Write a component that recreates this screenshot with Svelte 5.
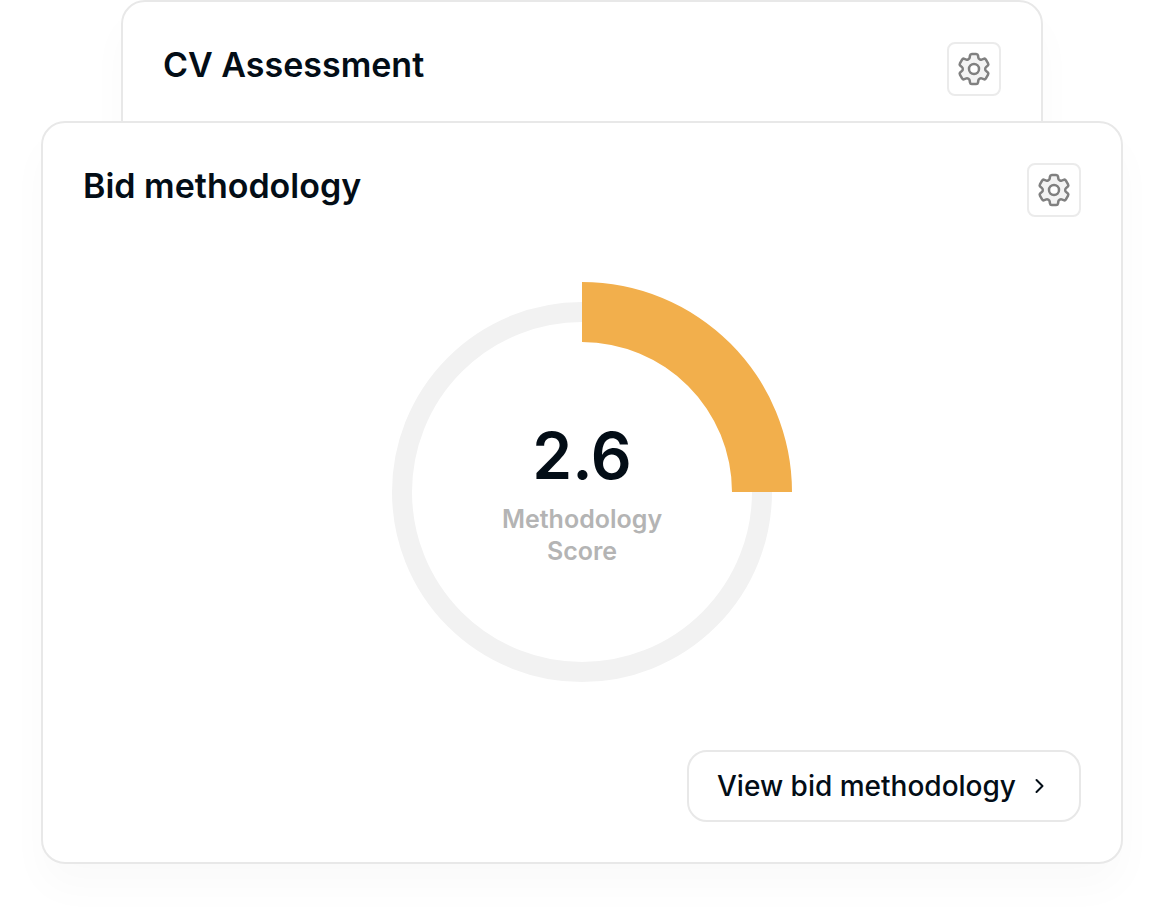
<script lang="ts">
	const gear = "M9.594 3.94c.09-.542.56-.94 1.11-.94h2.593c.55 0 1.02.398 1.11.94l.213 1.281c.063.374.313.686.645.87.074.04.147.083.22.127.324.196.72.257 1.075.124l1.217-.456a1.125 1.125 0 011.37.49l1.296 2.247a1.125 1.125 0 01-.26 1.431l-1.003.827c-.293.24-.438.613-.431.992a6.759 6.759 0 010 .255c-.007.378.138.75.43.99l1.005.828c.424.35.534.954.26 1.43l-1.298 2.247a1.125 1.125 0 01-1.369.491l-1.217-.456c-.355-.133-.75-.072-1.076.124a6.57 6.57 0 01-.22.128c-.331.183-.581.495-.644.869l-.213 1.28c-.09.543-.56.941-1.11.941h-2.594c-.55 0-1.02-.398-1.11-.94l-.213-1.281c-.062-.374-.312-.686-.644-.87a6.52 6.52 0 01-.22-.127c-.325-.196-.72-.257-1.076-.124l-1.217.456a1.125 1.125 0 01-1.369-.49l-1.297-2.247a1.125 1.125 0 01.26-1.431l1.004-.827c.292-.24.437-.613.43-.992a6.932 6.932 0 010-.255c.007-.378-.138-.75-.43-.99l-1.004-.828a1.125 1.125 0 01-.26-1.43l1.297-2.247a1.125 1.125 0 011.37-.491l1.216.456c.356.133.751.072 1.076-.124.072-.044.146-.087.22-.128.332-.183.582-.495.644-.869l.214-1.281z";
</script>

{#snippet settings()}
	<button class="icon-btn" aria-label="Settings">
		<svg width="40" height="40" viewBox="0 0 24 24" fill="#f3f3f3" stroke="#808080" stroke-width="1.5" stroke-linejoin="round">
			<path d={gear} />
			<circle cx="12" cy="12" r="3" fill="#fff" />
		</svg>
	</button>
{/snippet}

<div class="page">
	<section class="card back">
		<header>
			<h2>CV Assessment</h2>
			{@render settings()}
		</header>
	</section>

	<section class="card front">
		<header>
			<h2>Bid methodology</h2>
			{@render settings()}
		</header>

		<div class="gauge">
			<svg width="420" height="420" viewBox="0 0 420 420">
				<circle cx="210" cy="210" r="180" fill="none" stroke="#f2f2f2" stroke-width="20" />
				<path d="M210 0A210 210 0 0 1 420 210H360A150 150 0 0 0 210 60Z" fill="#f2af4c" />
			</svg>
			<div class="score">
				<div class="value">2.6</div>
				<div class="label">Methodology<br />Score</div>
			</div>
		</div>

		<footer>
			<button class="view-btn">
				View bid methodology
				<svg width="24" height="24" viewBox="0 0 24 24" fill="none" stroke="#030d16" stroke-width="2" stroke-linecap="round" stroke-linejoin="round">
					<path d="M9.5 6l6 6-6 6" />
				</svg>
			</button>
		</footer>
	</section>
</div>

<style>
	:global(body) {
		background: #fff;
	}
	.page {
		width: 1164px;
		height: 914px;
		overflow: hidden;
		font-family: Inter, "Liberation Sans", sans-serif;
		color: #030d16;
	}
	.card {
		box-sizing: border-box;
		background: #fff;
		border: 2px solid #e8e8e8;
		border-radius: 24px;
		padding: 40px;
		box-shadow: 0 24px 40px rgba(0, 0, 0, 0.025);
	}
	.back {
		height: 200px;
		margin: 0 121px 0;
	}
	.front {
		position: relative;
		height: 743px;
		margin: -79px 41px 0;
		display: flex;
		flex-direction: column;
	}
	header {
		display: flex;
		justify-content: space-between;
		align-items: flex-start;
	}
	h2 {
		margin: 0;
		font-size: 34px;
		line-height: 46px;
		font-weight: 600;
	}
	.icon-btn {
		box-sizing: border-box;
		width: 54px;
		height: 54px;
		padding: 0;
		display: flex;
		align-items: center;
		justify-content: center;
		background: #fff;
		border: 2px solid #ebebeb;
		border-radius: 8px;
	}
	.gauge {
		position: relative;
		width: 420px;
		height: 420px;
		margin: 65px auto 0;
	}
	.gauge svg {
		display: block;
	}
	.score {
		position: absolute;
		inset: 0;
		display: flex;
		flex-direction: column;
		align-items: center;
		justify-content: center;
		text-align: center;
	}
	.value {
		font-size: 64px;
		line-height: 78px;
		font-weight: 600;
	}
	.label {
		margin-top: 8px;
		font-size: 25px;
		line-height: 32px;
		font-weight: 600;
		color: #b4b4b4;
	}
	footer {
		margin-top: auto;
		display: flex;
		justify-content: flex-end;
	}
	.view-btn {
		box-sizing: border-box;
		width: 394px;
		height: 72px;
		display: flex;
		align-items: center;
		justify-content: space-between;
		padding: 0 28px;
		background: #fff;
		border: 2px solid #e8e8e8;
		border-radius: 20px;
		font-family: inherit;
		font-size: 28px;
		font-weight: 500;
		color: #030d16;
	}
</style>
